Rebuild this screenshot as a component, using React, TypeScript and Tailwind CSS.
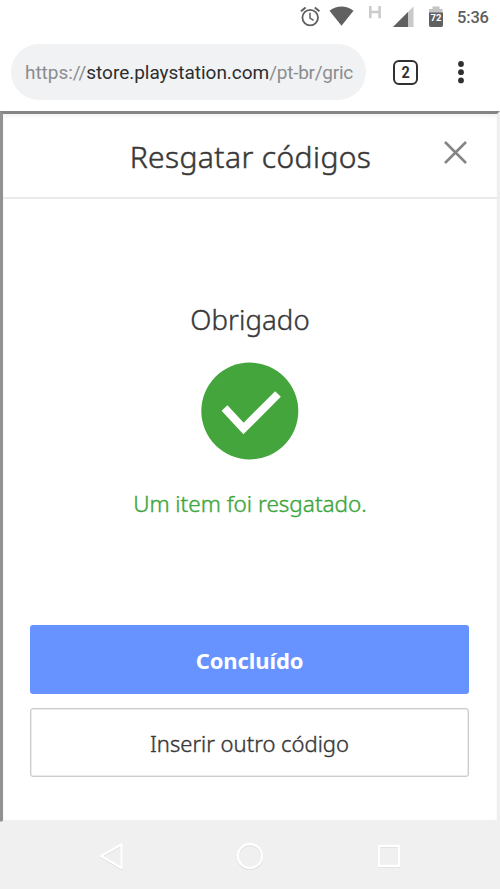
import React from "react";

function StatusBar() {
  return (
    <div className="h-[44px] w-full shrink-0">
      <svg width="500" height="44" viewBox="0 0 500 44" aria-hidden="true">
        <g fill="none" stroke="#606060" strokeWidth="1.8">
          <circle cx="310.2" cy="17.6" r="7.8" />
          <path d="M310 12.8v5.400l3.600 2.200" strokeWidth="1.5" />
          <path d="M301 11.200l4.600-3.800M314.800 7.400l4.600 3.800" strokeWidth="2" />
        </g>
        <path d="M329.500 10.700Q341.500 2.500 353.500 10.700L341.500 25.800Z" fill="#606060" />
        <path d="M370.300 6v12.200M379.600 6v12.200M370.300 12h9.300" stroke="#cbcbcb" strokeWidth="2.600" />
        <path d="M393 27L413.500 6.500V27Z" fill="#c9c9c9" />
        <path d="M393 27L408 12V27Z" fill="#606060" />
        <path d="M432.500 6.500h7v2.500h3v4h-13.500v-4h3.500z" fill="#c4c4c4" />
        <path d="M429 12.500h14V25q0 2-1.500 2h-11q-1.500 0-1.500-2z" fill="#606060" />
        <text x="436" y="20.600" textAnchor="middle" fontFamily="Roboto, sans-serif" fontSize="9.500" fontWeight="700" fill="#fff">72</text>
        <text x="457" y="23" fontFamily="Roboto, sans-serif" fontSize="16.500" fontWeight="500" textLength="32" fill="#5e5e5e">5:36</text>
      </svg>
    </div>
  );
}

function AddressBar() {
  return (
    <div className="flex h-[67px] shrink-0 items-start pl-[11px]">
      <div className="flex h-[56px] w-[355px] items-center rounded-full bg-[#f1f2f4] pl-[14px] pr-[10px] pt-[2px]">
        <div className="w-full whitespace-nowrap font-[Roboto,sans-serif] text-[19px] leading-[30px] tracking-[-0.030px] text-[#8b8d8f]">
          https://<span className="text-[#2c2d2f]">store.playstation.com</span>
          <span className="tracking-[-0.250px]">/pt-br/gric</span>
        </div>
      </div>
      <div className="ml-[27px] mt-[16px] flex h-[25px] w-[25px] items-center justify-center rounded-[6px] border-[2.500px] border-[#303030] font-[Roboto,sans-serif] text-[16px] font-bold leading-none text-[#303030]">
        <span className="scale-x-90">2</span>
      </div>
      <svg className="ml-[38px] mt-[14px]" width="10" height="30" viewBox="0 0 10 30" fill="#303030">
        <circle cx="5" cy="6" r="2.900" />
        <circle cx="5" cy="14.200" r="2.900" />
        <circle cx="5" cy="22.400" r="2.900" />
      </svg>
    </div>
  );
}

function NavigationBar() {
  return (
    <div className="h-[69px] shrink-0 bg-[#f0f0f0]">
      <svg width="500" height="69" viewBox="0 0 500 69" fill="none" strokeLinejoin="round">
        <g stroke="#dadada" strokeWidth="2.400" transform="translate(0 0.8)">
          <path d="M121.500 24.500v23.500L101 36z" />
          <circle cx="250" cy="36" r="12" />
          <rect x="379" y="26" width="20" height="20" />
        </g>
        <g stroke="#fff" strokeWidth="2.400">
          <path d="M121.500 24.500v23.500L101 36z" />
          <circle cx="250" cy="36" r="12" />
          <rect x="379" y="26" width="20" height="20" />
        </g>
        <path d="M0 0h3q0 1.500-1.500 1.500H0z" fill="#929292" />
      </svg>
    </div>
  );
}

export default function App() {
  return (
    <div className="flex h-[889px] w-[500px] flex-col overflow-hidden bg-white font-['Noto_Sans',sans-serif] text-[#383838]">
      <StatusBar />
      <AddressBar />
      <main className="flex h-[709px] shrink-0 flex-col border-l-[3px] border-r-[3px] border-t-[3px] border-l-[#929292] border-r-[#eeeeee] border-t-[#858585] shadow-[inset_0_3px_3px_#f4f4f4]">
        <header className="flex h-[85px] shrink-0 items-start border-b-2 border-[#ebebeb]">
          <div className="w-[56px]" />
          <h1 className="flex-1 pt-[22px] text-center text-[30px] font-light leading-[42px] tracking-[0.400px] [-webkit-text-stroke:0.500px_#383838]">Resgatar códigos</h1>
          <svg className="mr-[28px] mt-[26px]" width="27" height="26" viewBox="0 0 27 26">
            <path d="M3 2L24 23M24 2L3 23" stroke="#858585" strokeWidth="2.600" />
          </svg>
        </header>
        <section className="flex flex-1 flex-col items-center">
          <h2 className="mt-[100px] text-[27.500px] font-light leading-[42px] tracking-[0.100px] [-webkit-text-stroke:0.400px_#383838]">Obrigado</h2>
          <svg className="mt-[21px]" width="98" height="98" viewBox="0 0 98 98">
            <circle cx="48.800" cy="49" r="48.500" fill="#43a53c" />
            <path d="M23.500 46L42.500 66.500L77 32" fill="none" stroke="#fff" strokeWidth="8" />
          </svg>
          <p className="mt-[28px] text-[22.500px] font-light leading-[32px] text-[#3ca63b] [-webkit-text-stroke:0.400px_#3ca63b]">Um item foi resgatado.</p>
        </section>
        <div className="flex flex-col gap-[14px] pl-[27px] pr-[28px] pb-[43px]">
          <button className="h-[69px] rounded-[3px] bg-[#6693ff] pt-[2px] text-[22px] font-bold tracking-[-0.100px] text-white">Concluído</button>
          <button className="h-[69px] rounded-[3px] border-[1.500px] border-[#cccccc] bg-white pt-[2px] text-[22px] font-light shadow-[inset_0_0_0_0.500px_#d8d8d8] [-webkit-text-stroke:0.400px_#383838]">Inserir outro código</button>
        </div>
      </main>
      <NavigationBar />
    </div>
  );
}
